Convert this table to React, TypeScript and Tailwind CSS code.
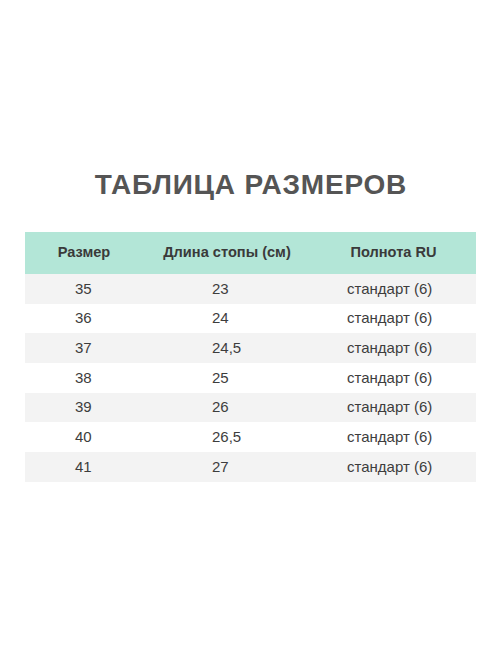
const rows = [
  ["35", "23", "стандарт (6)"],
  ["36", "24", "стандарт (6)"],
  ["37", "24,5", "стандарт (6)"],
  ["38", "25", "стандарт (6)"],
  ["39", "26", "стандарт (6)"],
  ["40", "26,5", "стандарт (6)"],
  ["41", "27", "стандарт (6)"],
];

export default function App() {
  return (
    <div className="w-[502px] h-[669px] bg-white flex flex-col font-['Liberation_Sans',sans-serif]">
      <h1 className="mt-[169px] h-[32px] text-center text-[28px] leading-[32px] tracking-[0.8px] font-bold text-[#555555]">
        ТАБЛИЦА РАЗМЕРОВ
      </h1>
      <div className="mt-[31px] ml-[25px] w-[451px]">
        {/* header */}
        <div className="grid grid-cols-[118px_168px_165px] h-[42px] items-center bg-[#b3e6d7] text-[14.6px] font-bold text-[#3a3a3a]">
          <div className="text-center">Размер</div>
          <div className="text-center">Длина стопы (см)</div>
          <div className="text-center">Полнота RU</div>
        </div>
        {rows.map((r, i) => (
          <div
            key={r[0]}
            className={`grid grid-cols-[118px_168px_165px] h-[29.7px] items-center text-[15px] text-[#3d3d3d] ${i % 2 === 0 ? "bg-[#f3f3f3]" : "bg-white"}`}
          >
            <div className="pl-[50px]">{r[0]}</div>
            <div className="pl-[69px]">{r[1]}</div>
            <div className="pl-[36px]">{r[2]}</div>
          </div>
        ))}
      </div>
    </div>
  );
}
